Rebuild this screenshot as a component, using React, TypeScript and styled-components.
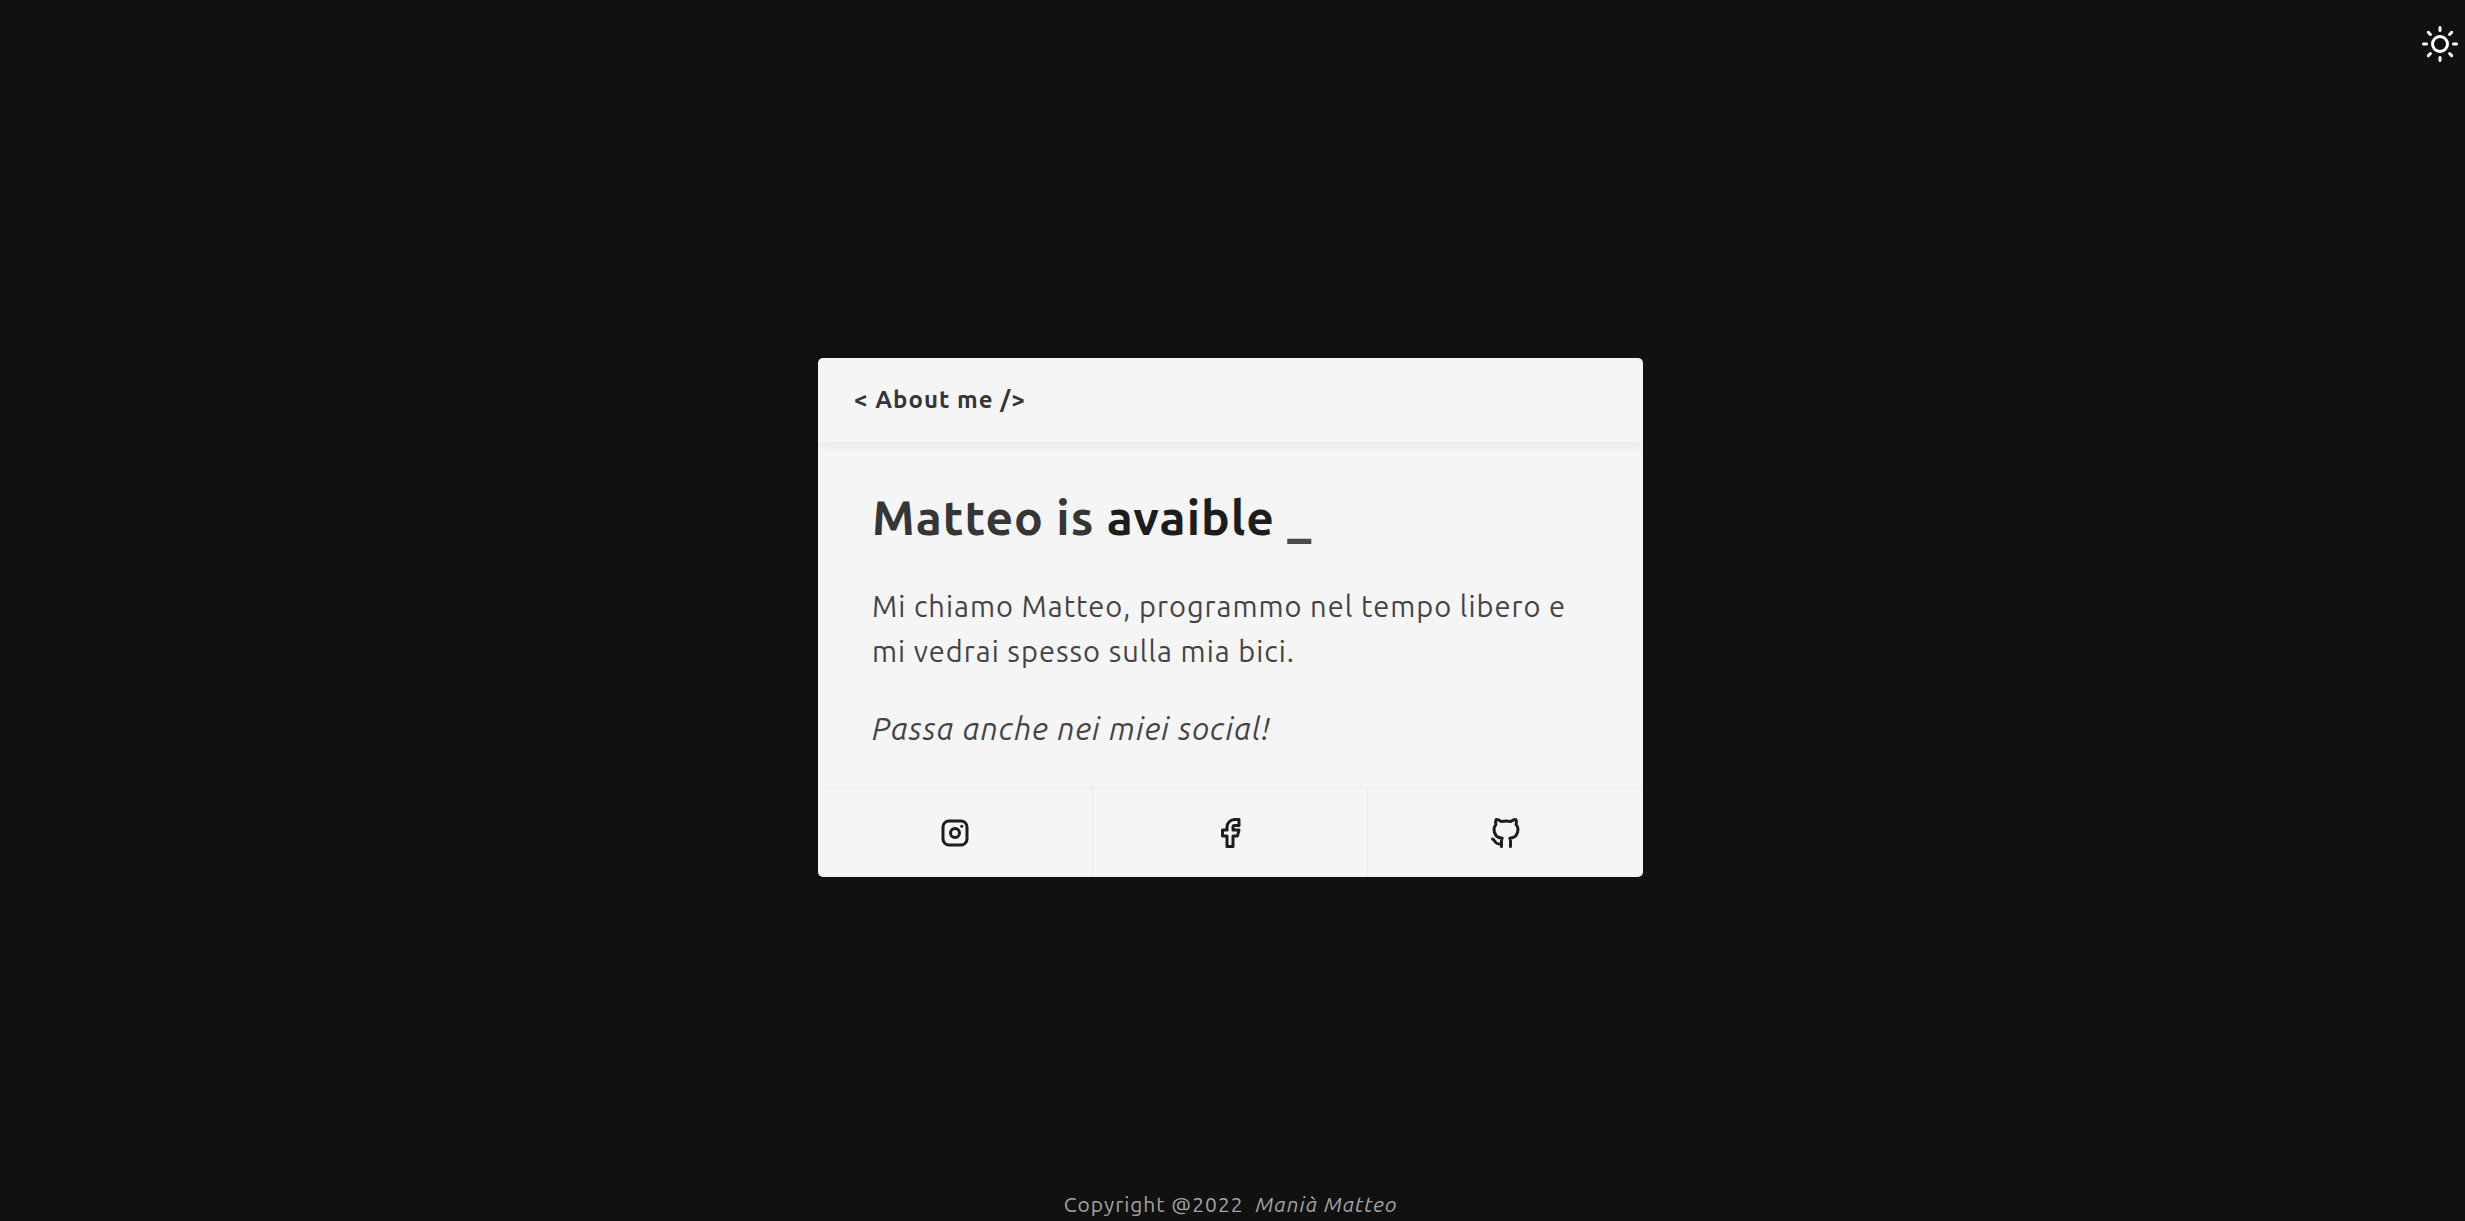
import React, { useState } from "react";
import styled, { createGlobalStyle } from "styled-components";

const GlobalStyle = createGlobalStyle`
  *, *::before, *::after { box-sizing: border-box; }
  body {
    margin: 0;
    background: #111;
    font-family: Ubuntu, "Noto Sans", "Open Sans", sans-serif;
    letter-spacing: 1px;
  }
`;

const Page = styled.div`
  display: grid;
  grid-template-rows: 88px 1fr 88px;
  min-height: 100vh;
  padding-right: 4px;
  background: #111;
`;

const TopBar = styled.header`
  display: flex;
  align-items: center;
  justify-content: flex-end;
`;

const ThemeToggle = styled.button`
  display: flex;
  padding: 3px;
  border: 0;
  background: none;
  color: #fff;
  cursor: pointer;
`;

const Main = styled.main`
  display: flex;
  align-items: center;
  justify-content: center;
  padding-top: 14px;
`;

const Card = styled.article`
  width: 100%;
  max-width: 825px;
  border-radius: 5px;
  overflow: hidden;
  background: #f5f5f5;
  color: #444;
`;

const CardHeader = styled.div`
  padding: 24px 36px;
  font-size: 24px;
  font-weight: 700;
  line-height: 36px;
  color: #363636;
  box-shadow: 0 4px 12px rgba(10, 10, 10, 0.06);
`;

const CardBody = styled.div`
  padding: 36px 54px;
`;

const Title = styled.h1`
  margin: 0 0 28px;
  font-size: 48px;
  font-weight: 700;
  line-height: 78px;
  color: #363636;
`;

const Highlight = styled.span`
  color: #1d1d1d;
`;

const Cursor = styled.span`
  color: #4a4a4a;
`;

const Text = styled.p`
  margin: 0 0 32px;
  font-size: 29px;
  line-height: 45px;
`;

const Invite = styled.p`
  margin: 0;
  font-size: 31px;
  font-style: italic;
  line-height: 45px;
`;

const Socials = styled.nav`
  display: grid;
  grid-template-columns: repeat(3, 1fr);
  border-top: 1px solid #ebebeb;
`;

const SocialLink = styled.a`
  display: flex;
  align-items: center;
  justify-content: center;
  height: 89px;
  color: #1d1d1d;

  &:not(:last-child) { border-right: 1px solid #ebebeb; }
`;

const Copyright = styled.footer`
  display: flex;
  align-items: flex-end;
  justify-content: center;
  gap: 12px;
  font-size: 21px;
  line-height: 34px;
  color: #a3a3a3;
`;

const Icon = styled.svg`
  width: 36px;
  height: 36px;
  fill: none;
  stroke: currentColor;
  stroke-width: 2;
  stroke-linecap: round;
  stroke-linejoin: round;
`;

const socials = [
  {
    name: "Instagram",
    href: "#instagram",
    art: (
      <>
        <rect x="4" y="4" width="16" height="16" rx="4" />
        <circle cx="12" cy="12" r="3" />
        <path d="M16.5 7.5v.001" />
      </>
    ),
  },
  {
    name: "Facebook",
    href: "#facebook",
    art: <path d="M7 10v4h3v7h4v-7h3l1-4h-4V8a1 1 0 0 1 1-1h3V3h-3a5 5 0 0 0-5 5v2H7" />,
  },
  {
    name: "GitHub",
    href: "#github",
    art: (
      <path d="M9 19c-4.3 1.4-4.3-2.5-6-3m12 5v-3.5c0-1 .1-1.4-.5-2 2.8-.3 5.5-1.4 5.5-6a4.6 4.6 0 0 0-1.3-3.2 4.2 4.2 0 0 0-.1-3.2s-1.1-.3-3.5 1.3a12.3 12.3 0 0 0-6.2 0C6.5 2.8 5.4 3.1 5.4 3.1a4.2 4.2 0 0 0-.1 3.2A4.6 4.6 0 0 0 4 9.5c0 4.6 2.7 5.7 5.5 6-.6.6-.6 1.2-.5 2V21" />
    ),
  },
];

export default function App() {
  const [pressed, setPressed] = useState(false);
  return (
    <>
      <GlobalStyle />
      <Page>
        <TopBar>
          <ThemeToggle
            type="button"
            aria-label="Toggle theme"
            aria-pressed={pressed}
            onClick={() => setPressed(!pressed)}
          >
            <Icon viewBox="0 0 24 24" overflow="visible" aria-hidden="true">
              <circle cx="12" cy="12" r="5" />
              <path d="M12 1v2m0 18v2M4.22 4.22l1.42 1.42m12.72 12.72l1.42 1.42M1 12h2m18 0h2M4.22 19.78l1.42-1.42M18.36 5.64l1.42-1.42" />
            </Icon>
          </ThemeToggle>
        </TopBar>
        <Main>
          <Card>
            <CardHeader>&lt; About me /&gt;</CardHeader>
            <CardBody>
              <Title>
                Matteo is <Highlight>avaible</Highlight> <Cursor>_</Cursor>
              </Title>
              <Text>
                Mi chiamo Matteo, programmo nel tempo libero e mi vedrai spesso sulla mia bici.
              </Text>
              <Invite>Passa anche nei miei social!</Invite>
            </CardBody>
            <Socials aria-label="Social">
              {socials.map((s) => (
                <SocialLink key={s.name} href={s.href} aria-label={s.name}>
                  <Icon viewBox="0 0 24 24" aria-hidden="true">
                    {s.art}
                  </Icon>
                </SocialLink>
              ))}
            </Socials>
          </Card>
        </Main>
        <Copyright>
          <span>Copyright @2022</span>
          <em>Manià Matteo</em>
        </Copyright>
      </Page>
    </>
  );
}
